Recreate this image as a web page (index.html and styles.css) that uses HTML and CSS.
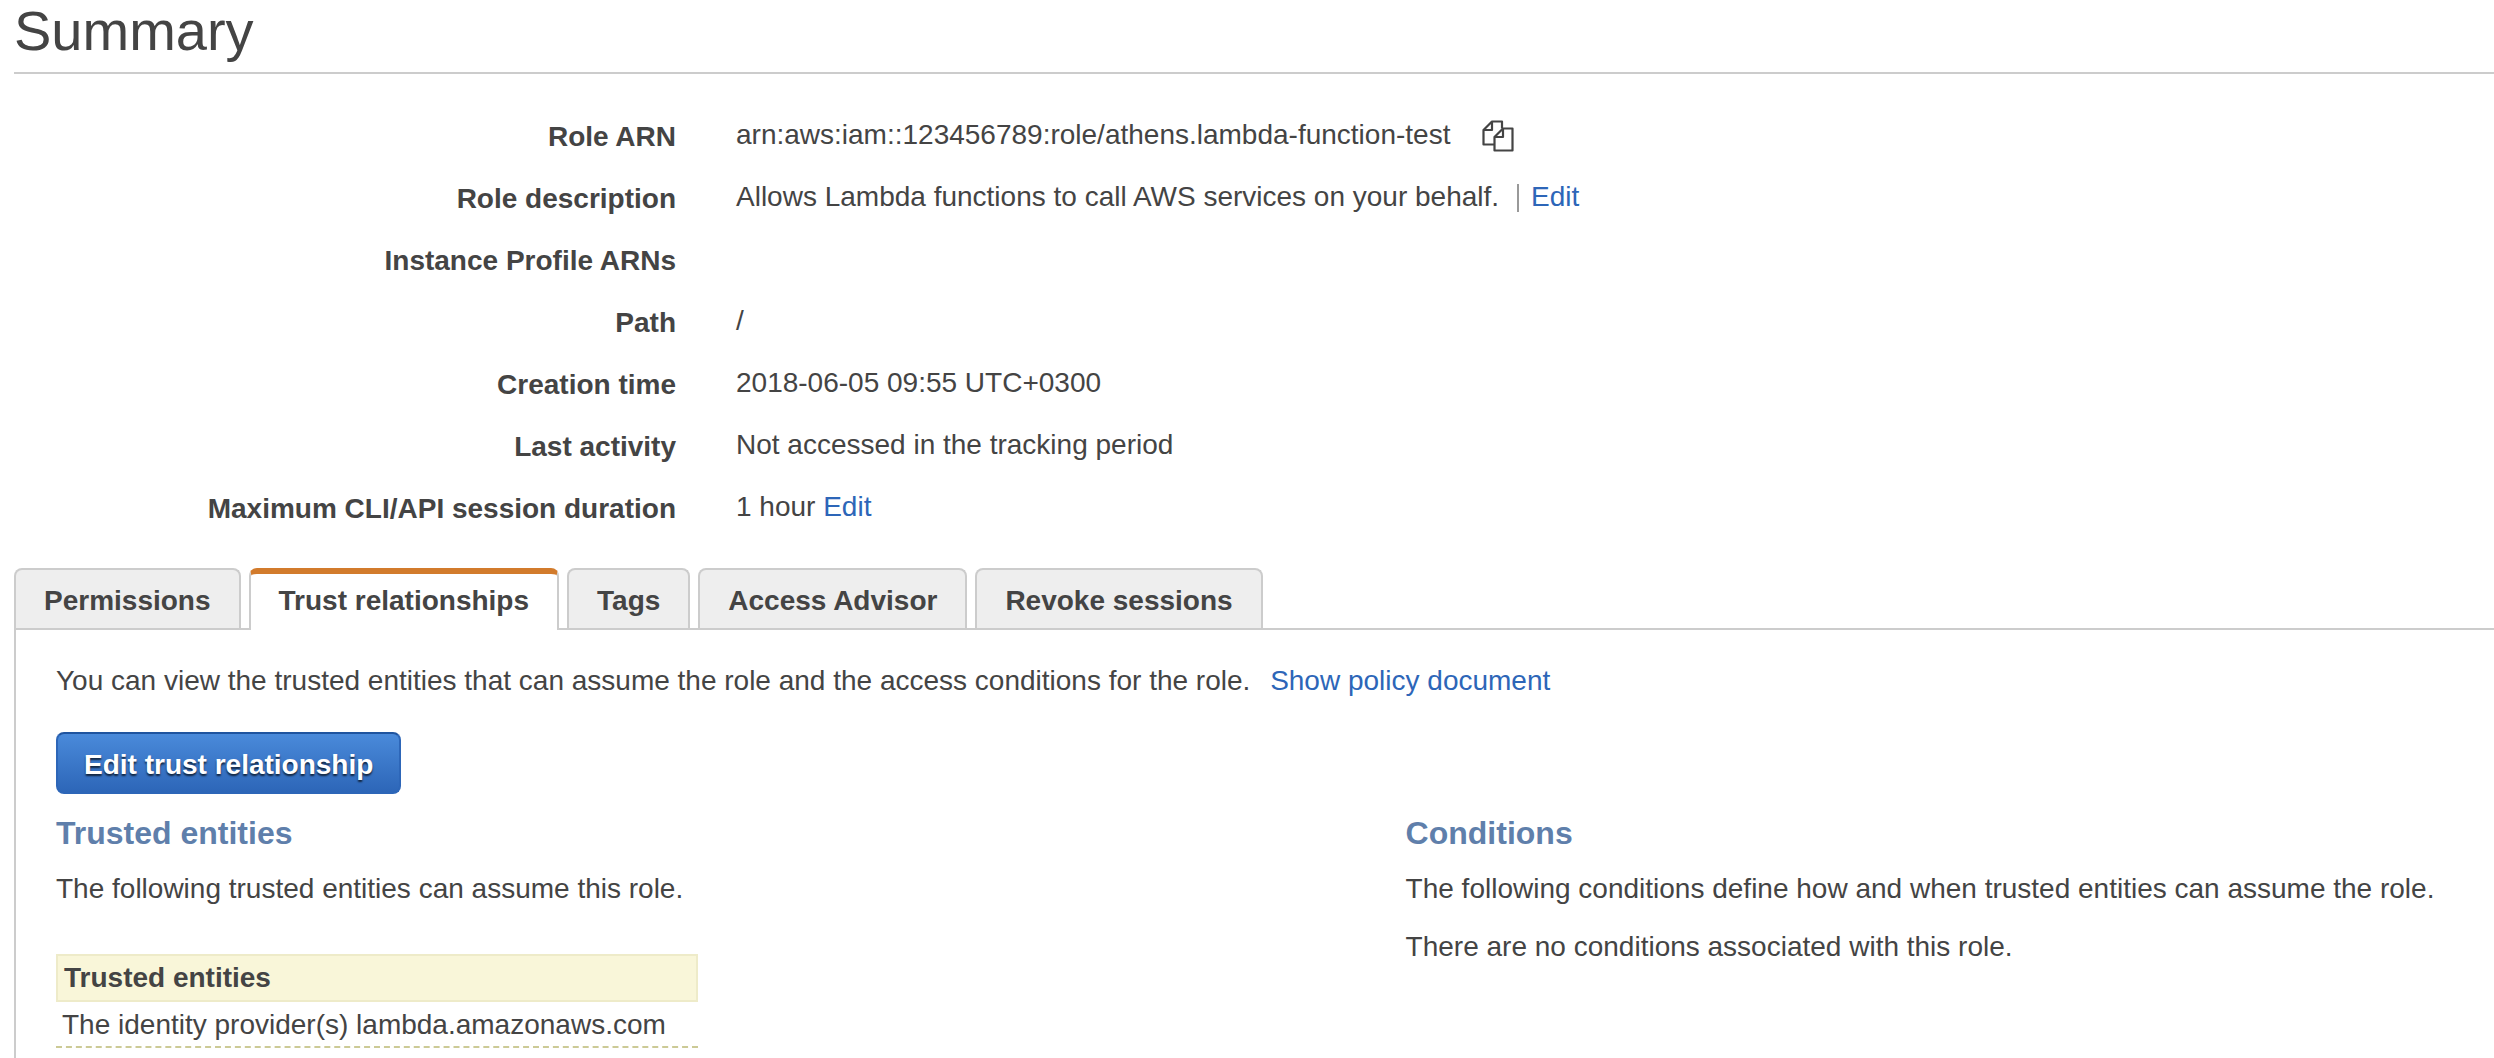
FILE: index.html
```html
<!DOCTYPE html>
<html lang="en">
<head>
<meta charset="utf-8">
<title>Role summary</title>
<link rel="stylesheet" href="styles.css">
</head>
<body>
<main class="page">
  <h1 class="page-title">Summary</h1>

  <dl class="details">
    <dt>Role ARN</dt>
    <dd>arn:aws:iam::123456789:role/athens.lambda-function-test<button class="copy" type="button" aria-label="Copy role ARN"><svg viewBox="0 0 32 32" width="32" height="32" fill="none" stroke="currentColor" stroke-width="2.2" stroke-linejoin="round"><path d="M12.500 24.500H1.500V10l8.500-8.500h10v7M10 1.500V10H1.500"/><path d="M21 8.500h9.500v22h-18V17zM21 8.500V17h-8.500"/></svg></button></dd>
    <dt>Role description</dt>
    <dd>Allows Lambda functions to call AWS services on your behalf.<span class="divider"></span><a href="#description">Edit</a></dd>
    <dt>Instance Profile ARNs</dt>
    <dd></dd>
    <dt>Path</dt>
    <dd>/</dd>
    <dt>Creation time</dt>
    <dd>2018-06-05 09:55 UTC+0300</dd>
    <dt>Last activity</dt>
    <dd>Not accessed in the tracking period</dd>
    <dt>Maximum CLI/API session duration</dt>
    <dd>1 hour <a href="#duration">Edit</a></dd>
  </dl>

  <div class="tabs" role="tablist">
    <button class="tab" type="button" role="tab">Permissions</button>
    <button class="tab tab-active" type="button" role="tab" aria-selected="true">Trust relationships</button>
    <button class="tab" type="button" role="tab">Tags</button>
    <button class="tab" type="button" role="tab">Access Advisor</button>
    <button class="tab" type="button" role="tab">Revoke sessions</button>
  </div>

  <section class="panel" role="tabpanel">
    <p class="intro">You can view the trusted entities that can assume the role and the access conditions for the role. <a class="policy-link" href="#policy">Show policy document</a></p>
    <button class="primary" type="button">Edit trust relationship</button>
    <div class="columns">
      <section>
        <h2>Trusted entities</h2>
        <p>The following trusted entities can assume this role.</p>
        <table class="entities">
          <thead><tr><th scope="col">Trusted entities</th></tr></thead>
          <tbody><tr><td>The identity provider(s) lambda.amazonaws.com</td></tr></tbody>
        </table>
      </section>
      <section>
        <h2>Conditions</h2>
        <p>The following conditions define how and when trusted entities can assume the role.</p>
        <p>There are no conditions associated with this role.</p>
      </section>
    </div>
  </section>
</main>
</body>
</html>
```
FILE: styles.css
```css
* {
  box-sizing: border-box;
}

body {
  margin: 0;
  background: #fff;
  color: #444;
  font-family: "Liberation Sans", Arial, sans-serif;
  font-size: 28px;
  line-height: 34px;
}

h1, h2, p, dl, dd {
  margin: 0;
}

a {
  color: #2d66b8;
  text-decoration: none;
}

button {
  font: inherit;
  color: inherit;
}

.page {
  display: flex;
  flex-direction: column;
  min-height: 100vh;
  padding-left: 14px;
}

.page-title {
  height: 74px;
  border-bottom: 2px solid #ccc;
  font-size: 56px;
  font-weight: normal;
  line-height: 62px;
}

.details {
  display: grid;
  grid-template-columns: 662px 1fr;
  grid-auto-rows: 62px;
  column-gap: 60px;
  padding: 44px 0 16px;
}

.details dt {
  padding-top: 2px;
  font-weight: bold;
  text-align: right;
}

.copy {
  padding: 0;
  margin-left: 32px;
  border: 0;
  background: none;
  height: 32px;
  vertical-align: -8px;
}

.copy svg {
  display: block;
}

.divider {
  display: inline-block;
  width: 2px;
  height: 28px;
  margin: 0 12px 0 18px;
  background: #999;
  vertical-align: -6px;
}

.tabs {
  display: flex;
  gap: 8px;
}

.tab {
  height: 60px;
  padding: 4px 28px 0;
  border: 2px solid #ccc;
  border-bottom: 0;
  border-radius: 8px 8px 0 0;
  background: #eee;
  font-weight: bold;
}

.tab-active {
  height: 62px;
  margin-bottom: -2px;
  padding-bottom: 2px;
  padding-top: 0;
  border-top: 6px solid #d27b2c;
  background: #fff;
  z-index: 1;
}

.panel {
  flex: 1;
  padding: 34px 0 8px 40px;
  border-top: 2px solid #ccc;
  border-left: 2px solid #ccc;
}

.intro {
  margin-bottom: 34px;
}

.policy-link {
  margin-left: 12px;
}

.primary {
  display: block;
  height: 62px;
  padding: 4px 26px 0;
  border: 2px solid #2d66b8;
  border-top-color: #1f549f;
  border-radius: 8px;
  background: linear-gradient(#4a8ada, #2d66b8);
  color: #fff;
  font-weight: bold;
  text-shadow: 0 2px 2px rgba(0, 0, 0, 0.7);
}

.columns {
  display: grid;
  grid-template-columns: 31fr 25fr;
  padding-top: 20px;
}

h2 {
  margin-bottom: 20px;
  color: #5f7fab;
  font-size: 32px;
  line-height: 38px;
}

.columns p {
  margin-bottom: 24px;
}

.entities {
  width: 642px;
  margin-top: 48px;
  border-collapse: separate;
  border-spacing: 0;
}

.entities th {
  height: 48px;
  padding: 0 6px;
  border: 2px solid #eeebc9;
  background: #f9f6d9;
  text-align: left;
}

.entities td {
  height: 46px;
  padding: 2px 6px 0;
  border-bottom: 2px dashed #ccca96;
}
```
